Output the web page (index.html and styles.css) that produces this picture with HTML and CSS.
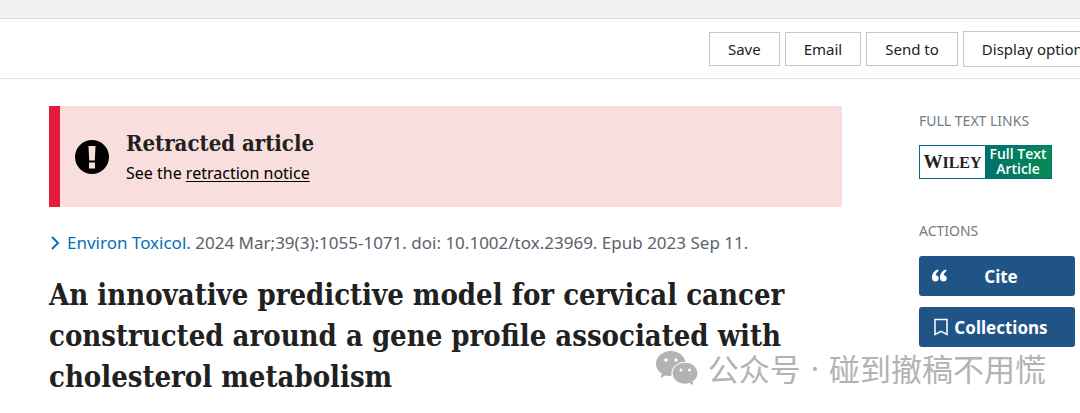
FILE: index.html
```
<!DOCTYPE html>
<html lang="en">
<head>
    <meta charset="UTF-8">
    <meta name="viewport" content="width=device-width, initial-scale=1.0">
    <title>An innovative predictive model for cervical cancer</title>
    <link rel="stylesheet" href="styles.css">
</head>
<body>
    <div class="top-strip"></div>
    <div class="toolbar">
        <button type="button">Save</button>
        <button type="button">Email</button>
        <button type="button">Send to</button>
        <button type="button" class="display-options">Display options</button>
    </div>

    <div class="page">
        <main>
            <section class="retraction">
                <svg class="alert-icon" viewBox="0 0 34 34" aria-hidden="true">
                    <circle cx="17" cy="17" r="17"/>
                    <path fill="#f8dedd" d="M13.500 6h7l-.7 14.500h-5.600zM14 22.500h6V28.500h-6z"/>
                </svg>
                <div>
                    <h2>Retracted article</h2>
                    <p>See the <a href="#">retraction notice</a></p>
                </div>
            </section>

            <div class="citation">
                <svg class="chevron" viewBox="0 0 10 14" aria-hidden="true">
                    <path d="M2 1l6 6-6 6"/>
                </svg>
                <span><a href="#">Environ Toxicol.</a> 2024 Mar;39(3):1055-1071. doi: 10.1002/tox.23969. Epub 2023 Sep 11.</span>
            </div>

            <h1>An innovative predictive model for cervical cancer constructed around a gene profile associated with cholesterol metabolism</h1>
        </main>

        <aside>
            <h3>FULL TEXT LINKS</h3>
            <a href="#" class="wiley">
                <span class="wiley-name">W<span>ILEY</span></span>
                <span class="wiley-text">Full Text Article</span>
            </a>
            <h3>ACTIONS</h3>
            <div class="actions">
                <button type="button">
                    <svg viewBox="0 0 18 18" aria-hidden="true">
                        <path fill="#fff" d="M7 2.500C3.500 3.500 1 6.500 1 10.400 1 13 2.400 14.500 4.500 14.500 6.400 14.500 7.700 13.200 7.700 11.400 7.700 9.600 6.500 8.400 4.700 8.300 4.900 6.400 5.800 5.200 7.500 4zM15 2.500c-3.500 1-6 4-6 7.900 0 2.600 1.400 4.100 3.500 4.100 1.900 0 3.200-1.300 3.200-3.100 0-1.800-1.200-3-3-3.100.2-1.900 1.100-3.100 2.800-4.300z"/>
                    </svg>
                    <span>Cite</span>
                </button>
                <button type="button">
                    <svg viewBox="0 0 18 18" aria-hidden="true">
                        <path fill="none" stroke="#fff" stroke-width="1.500" d="M4 1.500h12v15l-6-3.200-6 3.200z"/>
                    </svg>
                    <span>Collections</span>
                </button>
            </div>
        </aside>
    </div>

    <div class="watermark" lang="zh-CN">
        <svg viewBox="0 0 42 34" aria-hidden="true">
            <path fill="#b3b3b3" d="M15 0C6.700 0 0 5.700 0 12.800c0 4.100 2.200 7.500 5.800 9.900L4.500 27l5.200-2.700c1.900.6 3.600.8 5.800.8C14.300 17.700 20 10.800 29.500 10.700 28 4.300 22 0 15 0z"/>
            <path fill="#b3b3b3" d="M29.200 11.800c-7 0-12.600 4.700-12.600 10.500s5.600 10.500 12.600 10.500c1.500 0 3-.3 4.300-.7l4.100 2-1.100-3.500c3-2 5-4.900 5-8.300 0-5.800-5.500-10.500-12.300-10.500z"/>
            <g fill="#fff">
                <circle cx="10" cy="9" r="1.800"/><circle cx="20" cy="9" r="1.800"/>
                <circle cx="25" cy="19" r="1.500"/><circle cx="33.500" cy="19" r="1.500"/>
            </g>
        </svg>
        <span>公众号</span><span class="dot">·</span><span>碰到撤稿不用慌</span>
    </div>
</body>
</html>
```
FILE: styles.css
```
* {
    box-sizing: border-box;
}
body {
    margin: 0;
    background-color: #fff;
    font-family: "Noto Sans", "Open Sans", sans-serif;
    color: #212121;
    position: relative;
}
h1, h2, h3, p {
    margin: 0;
}
h1, h2 {
    font-family: "DejaVu Serif Condensed", "DejaVu Serif", serif;
}
button {
    font-family: inherit;
    cursor: pointer;
}
.top-strip {
    height: 19px;
    background-color: #f0f0f0;
    border-bottom: 1px solid #dcdcdc;
}
.toolbar {
    display: flex;
    justify-content: flex-end;
    align-items: center;
    gap: 5px;
    height: 60px;
    overflow: hidden;
    border-bottom: 1px solid #e4e4e4;
}
.toolbar button {
    flex-shrink: 0;
    height: 34px;
    padding: 0 18px;
    background-color: #fff;
    border: 1px solid #c5c6cb;
    font-size: 15px;
    color: #212121;
}
.toolbar .display-options {
    height: 36px;
    margin-right: -29px;
}
.page {
    display: grid;
    grid-template-columns: 1fr 156px;
    gap: 77px;
    padding: 27px 5px 0 49px;
}
.retraction {
    display: flex;
    align-items: center;
    gap: 17px;
    height: 101px;
    padding-left: 15px;
    background-color: #f8dedd;
    border-left: 11px solid #e31c3d;
}
.alert-icon {
    width: 34px;
    height: 34px;
}
.retraction h2 {
    font-size: 22px;
    line-height: 32px;
    font-weight: bold;
}
.retraction p {
    font-size: 16px;
    line-height: 28px;
    color: #000;
}
.retraction a {
    color: #000;
    text-underline-offset: 2px;
}
.citation {
    display: flex;
    align-items: center;
    gap: 7px;
    margin-top: 24px;
    font-size: 17px;
    line-height: 24px;
    color: #5b616b;
    white-space: nowrap;
}
.citation a {
    color: #0071bc;
    text-decoration: none;
}
.chevron {
    width: 10px;
    height: 14px;
    margin-left: 1px;
    fill: none;
    stroke: #0071bc;
    stroke-width: 2;
}
h1 {
    margin-top: 20px;
    font-size: 29px;
    line-height: 41px;
}
aside h3 {
    padding-top: 5px;
    font-size: 14px;
    line-height: 20px;
    font-weight: normal;
    color: #757a83;
}
.wiley {
    display: flex;
    width: 133px;
    height: 34px;
    margin: 14px 0 37px;
    border: 1px solid #007080;
    background-color: #fff;
    text-decoration: none;
}
.wiley-name {
    flex: 1;
    align-self: center;
    text-align: center;
    font-family: "Liberation Serif", serif;
    font-size: 19px;
    font-weight: bold;
    color: #222;
}
.wiley-name span {
    font-size: 16px;
}
.wiley-text {
    width: 66px;
    background: linear-gradient(90deg, #00706a, #078a55);
    font-family: "Open Sans", sans-serif;
    font-size: 14px;
    font-weight: 600;
    line-height: 15px;
    text-align: center;
    color: #fff;
}
.actions {
    display: flex;
    flex-direction: column;
    gap: 11px;
    margin-top: 15px;
}
.actions button {
    display: flex;
    align-items: center;
    height: 40px;
    padding: 0 22px 0 12px;
    background-color: #205487;
    border: 0;
    border-radius: 3px;
    font-size: 17px;
    font-weight: bold;
    color: #fff;
}
.actions svg {
    width: 18px;
    height: 18px;
}
.actions span {
    flex: 1;
    text-align: center;
}
.watermark {
    position: absolute;
    top: 350px;
    right: 34px;
    display: flex;
    align-items: center;
    gap: 10px;
    font-family: "Noto Sans CJK SC", sans-serif;
    font-size: 31px;
    line-height: 36px;
    color: #b3b3b3;
}
.watermark svg {
    width: 42px;
    height: 34px;
}
.watermark .dot {
    font-family: "Noto Sans", sans-serif;
}
```
